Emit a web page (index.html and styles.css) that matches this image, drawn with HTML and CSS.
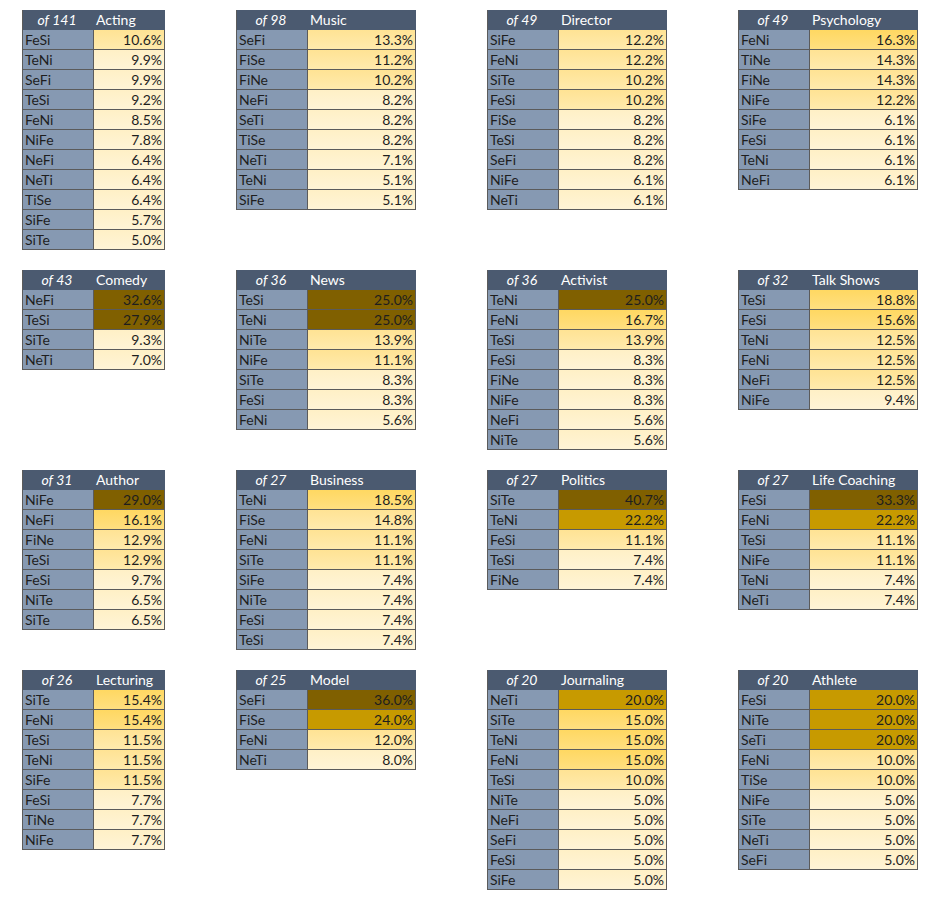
FILE: index.html
```html
<!DOCTYPE html>
<html>
<head>
<meta charset="utf-8">
<link rel="stylesheet" href="styles.css">
</head>
<body>
<div class="page">

<div class="tbl narrow">
  <div class="hn">of 141</div><div class="hc">Acting</div>
  <div class="t">FeSi</div><div class="v c1">10.6%</div>
  <div class="t">TeNi</div><div class="v c0">9.9%</div>
  <div class="t">SeFi</div><div class="v c0">9.9%</div>
  <div class="t">TeSi</div><div class="v c0">9.2%</div>
  <div class="t">FeNi</div><div class="v c0">8.5%</div>
  <div class="t">NiFe</div><div class="v c0">7.8%</div>
  <div class="t">NeFi</div><div class="v c0">6.4%</div>
  <div class="t">NeTi</div><div class="v c0">6.4%</div>
  <div class="t">TiSe</div><div class="v c0">6.4%</div>
  <div class="t">SiFe</div><div class="v c0">5.7%</div>
  <div class="t">SiTe</div><div class="v c0">5.0%</div>
</div>

<div class="tbl">
  <div class="hn">of 98</div><div class="hc">Music</div>
  <div class="t">SeFi</div><div class="v c1">13.3%</div>
  <div class="t">FiSe</div><div class="v c1">11.2%</div>
  <div class="t">FiNe</div><div class="v c1">10.2%</div>
  <div class="t">NeFi</div><div class="v c0">8.2%</div>
  <div class="t">SeTi</div><div class="v c0">8.2%</div>
  <div class="t">TiSe</div><div class="v c0">8.2%</div>
  <div class="t">NeTi</div><div class="v c0">7.1%</div>
  <div class="t">TeNi</div><div class="v c0">5.1%</div>
  <div class="t">SiFe</div><div class="v c0">5.1%</div>
</div>

<div class="tbl">
  <div class="hn">of 49</div><div class="hc">Director</div>
  <div class="t">SiFe</div><div class="v c1">12.2%</div>
  <div class="t">FeNi</div><div class="v c1">12.2%</div>
  <div class="t">SiTe</div><div class="v c1">10.2%</div>
  <div class="t">FeSi</div><div class="v c1">10.2%</div>
  <div class="t">FiSe</div><div class="v c0">8.2%</div>
  <div class="t">TeSi</div><div class="v c0">8.2%</div>
  <div class="t">SeFi</div><div class="v c0">8.2%</div>
  <div class="t">NiFe</div><div class="v c0">6.1%</div>
  <div class="t">NeTi</div><div class="v c0">6.1%</div>
</div>

<div class="tbl">
  <div class="hn">of 49</div><div class="hc">Psychology</div>
  <div class="t">FeNi</div><div class="v c2">16.3%</div>
  <div class="t">TiNe</div><div class="v c1">14.3%</div>
  <div class="t">FiNe</div><div class="v c1">14.3%</div>
  <div class="t">NiFe</div><div class="v c1">12.2%</div>
  <div class="t">SiFe</div><div class="v c0">6.1%</div>
  <div class="t">FeSi</div><div class="v c0">6.1%</div>
  <div class="t">TeNi</div><div class="v c0">6.1%</div>
  <div class="t">NeFi</div><div class="v c0">6.1%</div>
</div>

<div class="tbl narrow">
  <div class="hn">of 43</div><div class="hc">Comedy</div>
  <div class="t">NeFi</div><div class="v c4">32.6%</div>
  <div class="t">TeSi</div><div class="v c4">27.9%</div>
  <div class="t">SiTe</div><div class="v c0">9.3%</div>
  <div class="t">NeTi</div><div class="v c0">7.0%</div>
</div>

<div class="tbl">
  <div class="hn">of 36</div><div class="hc">News</div>
  <div class="t">TeSi</div><div class="v c4">25.0%</div>
  <div class="t">TeNi</div><div class="v c4">25.0%</div>
  <div class="t">NiTe</div><div class="v c1">13.9%</div>
  <div class="t">NiFe</div><div class="v c1">11.1%</div>
  <div class="t">SiTe</div><div class="v c0">8.3%</div>
  <div class="t">FeSi</div><div class="v c0">8.3%</div>
  <div class="t">FeNi</div><div class="v c0">5.6%</div>
</div>

<div class="tbl">
  <div class="hn">of 36</div><div class="hc">Activist</div>
  <div class="t">TeNi</div><div class="v c4">25.0%</div>
  <div class="t">FeNi</div><div class="v c2">16.7%</div>
  <div class="t">TeSi</div><div class="v c1">13.9%</div>
  <div class="t">FeSi</div><div class="v c0">8.3%</div>
  <div class="t">FiNe</div><div class="v c0">8.3%</div>
  <div class="t">NiFe</div><div class="v c0">8.3%</div>
  <div class="t">NeFi</div><div class="v c0">5.6%</div>
  <div class="t">NiTe</div><div class="v c0">5.6%</div>
</div>

<div class="tbl">
  <div class="hn">of 32</div><div class="hc">Talk Shows</div>
  <div class="t">TeSi</div><div class="v c2">18.8%</div>
  <div class="t">FeSi</div><div class="v c2">15.6%</div>
  <div class="t">TeNi</div><div class="v c1">12.5%</div>
  <div class="t">FeNi</div><div class="v c1">12.5%</div>
  <div class="t">NeFi</div><div class="v c1">12.5%</div>
  <div class="t">NiFe</div><div class="v c0">9.4%</div>
</div>

<div class="tbl narrow">
  <div class="hn">of 31</div><div class="hc">Author</div>
  <div class="t">NiFe</div><div class="v c4">29.0%</div>
  <div class="t">NeFi</div><div class="v c2">16.1%</div>
  <div class="t">FiNe</div><div class="v c1">12.9%</div>
  <div class="t">TeSi</div><div class="v c1">12.9%</div>
  <div class="t">FeSi</div><div class="v c0">9.7%</div>
  <div class="t">NiTe</div><div class="v c0">6.5%</div>
  <div class="t">SiTe</div><div class="v c0">6.5%</div>
</div>

<div class="tbl">
  <div class="hn">of 27</div><div class="hc">Business</div>
  <div class="t">TeNi</div><div class="v c2">18.5%</div>
  <div class="t">FiSe</div><div class="v c1">14.8%</div>
  <div class="t">FeNi</div><div class="v c1">11.1%</div>
  <div class="t">SiTe</div><div class="v c1">11.1%</div>
  <div class="t">SiFe</div><div class="v c0">7.4%</div>
  <div class="t">NiTe</div><div class="v c0">7.4%</div>
  <div class="t">FeSi</div><div class="v c0">7.4%</div>
  <div class="t">TeSi</div><div class="v c0">7.4%</div>
</div>

<div class="tbl">
  <div class="hn">of 27</div><div class="hc">Politics</div>
  <div class="t">SiTe</div><div class="v c4">40.7%</div>
  <div class="t">TeNi</div><div class="v c3">22.2%</div>
  <div class="t">FeSi</div><div class="v c1">11.1%</div>
  <div class="t">TeSi</div><div class="v c0">7.4%</div>
  <div class="t">FiNe</div><div class="v c0">7.4%</div>
</div>

<div class="tbl">
  <div class="hn">of 27</div><div class="hc">Life Coaching</div>
  <div class="t">FeSi</div><div class="v c4">33.3%</div>
  <div class="t">FeNi</div><div class="v c3">22.2%</div>
  <div class="t">TeSi</div><div class="v c1">11.1%</div>
  <div class="t">NiFe</div><div class="v c1">11.1%</div>
  <div class="t">TeNi</div><div class="v c0">7.4%</div>
  <div class="t">NeTi</div><div class="v c0">7.4%</div>
</div>

<div class="tbl narrow">
  <div class="hn">of 26</div><div class="hc">Lecturing</div>
  <div class="t">SiTe</div><div class="v c2">15.4%</div>
  <div class="t">FeNi</div><div class="v c2">15.4%</div>
  <div class="t">TeSi</div><div class="v c1">11.5%</div>
  <div class="t">TeNi</div><div class="v c1">11.5%</div>
  <div class="t">SiFe</div><div class="v c1">11.5%</div>
  <div class="t">FeSi</div><div class="v c0">7.7%</div>
  <div class="t">TiNe</div><div class="v c0">7.7%</div>
  <div class="t">NiFe</div><div class="v c0">7.7%</div>
</div>

<div class="tbl">
  <div class="hn">of 25</div><div class="hc">Model</div>
  <div class="t">SeFi</div><div class="v c4">36.0%</div>
  <div class="t">FiSe</div><div class="v c3">24.0%</div>
  <div class="t">FeNi</div><div class="v c1">12.0%</div>
  <div class="t">NeTi</div><div class="v c0">8.0%</div>
</div>

<div class="tbl">
  <div class="hn">of 20</div><div class="hc">Journaling</div>
  <div class="t">NeTi</div><div class="v c3">20.0%</div>
  <div class="t">SiTe</div><div class="v c2">15.0%</div>
  <div class="t">TeNi</div><div class="v c2">15.0%</div>
  <div class="t">FeNi</div><div class="v c2">15.0%</div>
  <div class="t">TeSi</div><div class="v c1">10.0%</div>
  <div class="t">NiTe</div><div class="v c0">5.0%</div>
  <div class="t">NeFi</div><div class="v c0">5.0%</div>
  <div class="t">SeFi</div><div class="v c0">5.0%</div>
  <div class="t">FeSi</div><div class="v c0">5.0%</div>
  <div class="t">SiFe</div><div class="v c0">5.0%</div>
</div>

<div class="tbl">
  <div class="hn">of 20</div><div class="hc">Athlete</div>
  <div class="t">FeSi</div><div class="v c3">20.0%</div>
  <div class="t">NiTe</div><div class="v c3">20.0%</div>
  <div class="t">SeTi</div><div class="v c3">20.0%</div>
  <div class="t">FeNi</div><div class="v c1">10.0%</div>
  <div class="t">TiSe</div><div class="v c1">10.0%</div>
  <div class="t">NiFe</div><div class="v c0">5.0%</div>
  <div class="t">SiTe</div><div class="v c0">5.0%</div>
  <div class="t">NeTi</div><div class="v c0">5.0%</div>
  <div class="t">SeFi</div><div class="v c0">5.0%</div>
</div>

</div>
</body>
</html>
```
FILE: styles.css
```css
html, body {
  margin: 0;
  padding: 0;
  background: #ffffff;
}

body {
  font-family: Lato, "Open Sans", "Liberation Sans", sans-serif;
  font-size: 14px;
  color: #1e1e1e;
}

.page {
  display: grid;
  grid-template-columns: 143px 180px 180px 180px;
  column-gap: 71px;
  row-gap: 20px;
  align-items: start;
  padding: 10px 0 0 22px;
}

.tbl {
  display: grid;
  grid-template-columns: 71px 1fr;
  width: 180px;
  box-sizing: border-box;
  border-left: 1px solid #5b5b5b;
}

.tbl.narrow {
  width: 143px;
}

.tbl > div {
  height: 20px;
  box-sizing: border-box;
  line-height: 19px;
  white-space: nowrap;
  border-right: 1px solid #5b5b5b;
  border-bottom: 1px solid #5b5b5b;
}

.hn,
.hc {
  background: #4b5a70;
  color: #ffffff;
  border-right-color: #4b5a70 !important;
  border-bottom-color: #4b5a70 !important;
}

.tbl > .hc {
  border-right-color: #4b5a70 !important;
}

.hn {
  font-style: italic;
  text-align: center;
  padding-right: 2px;
}

.hc {
  padding-left: 2px;
}

.t {
  background: #8699b2;
  padding-left: 2px;
}

.v {
  text-align: right;
  padding-right: 2px;
}

.c0 {
  background: linear-gradient(#fff0c6, #fff4d6);
}

.c1 {
  background: linear-gradient(#ffe394, #ffeaad);
}

.c2 {
  background: linear-gradient(#ffd862, #ffdf80);
}

.c3 {
  background: #c79a00;
}

.c4 {
  background: #806000;
}
```
